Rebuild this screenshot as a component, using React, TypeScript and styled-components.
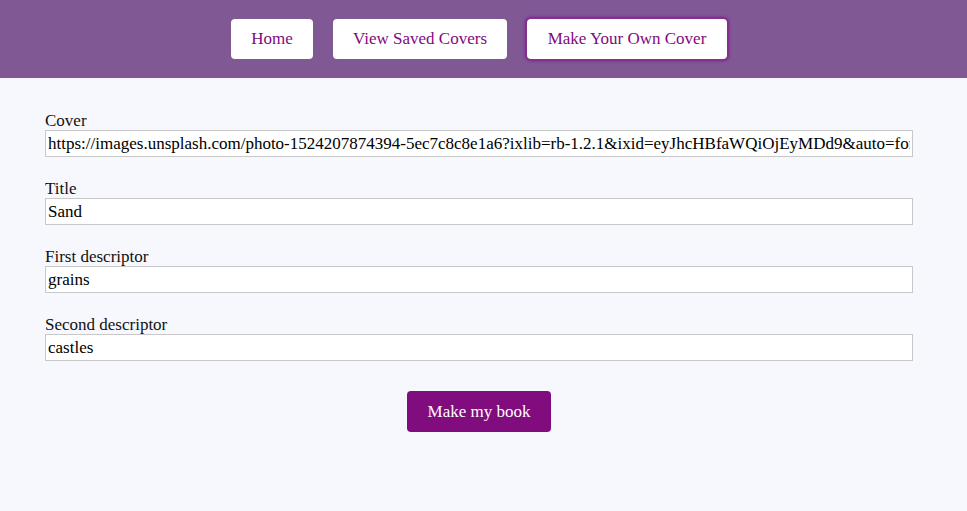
import React from 'react';
import styled, { createGlobalStyle } from 'styled-components';

const GlobalStyle = createGlobalStyle`
  html, body {
    margin: 0;
    padding: 0;
    background: #f7f8fd;
    font-family: "Liberation Serif", "DejaVu Serif", serif;
  }
`;

const Header = styled.header`
  height: 78px;
  background: #7f5894;
  display: flex;
  align-items: center;
  justify-content: center;
  gap: 20px;
  padding-right: 9px;
  box-sizing: border-box;
`;

const NavButton = styled.button<{ $width: number; $active?: boolean }>`
  width: ${(p) => p.$width}px;
  height: 40px;
  padding: 0;
  border: none;
  border-radius: 4px;
  background: #fff;
  color: #800a80;
  font-family: inherit;
  font-size: 17px;
  cursor: pointer;
  box-shadow: ${(p) =>
    p.$active ? '0 0 0 2px #84308e, 0 0 2px 3px rgba(132,48,142,0.7)' : 'none'};
`;

const Form = styled.form`
  padding: 34px 54px 0 45px;
  display: flex;
  flex-direction: column;
`;

const Field = styled.div`
  display: flex;
  flex-direction: column;
  margin-bottom: 23px;
`;

const Label = styled.label`
  font-size: 17px;
  color: #111;
  line-height: 18px;
`;

const Input = styled.input`
  height: 27px;
  box-sizing: border-box;
  border: 1px solid #c8c8c8;
  background: #fff;
  padding: 0 2px;
  font-family: inherit;
  font-size: 17px;
  color: #000;
  outline: none;
`;

const Submit = styled.button`
  align-self: center;
  margin-top: 7px;
  width: 144px;
  height: 41px;
  border: none;
  border-radius: 4px;
  background: #800c7d;
  color: #fff;
  font-family: inherit;
  font-size: 17px;
  cursor: pointer;
`;

const fields = [
  {
    label: 'Cover',
    value:
      'https://images.unsplash.com/photo-1524207874394-5ec7c8c8e1a6?ixlib=rb-1.2.1&ixid=eyJhcHBfaWQiOjEyMDd9&auto=format&fit=crop&w=800&q=60',
  },
  { label: 'Title', value: 'Sand' },
  { label: 'First descriptor', value: 'grains' },
  { label: 'Second descriptor', value: 'castles' },
];

export default function App() {
  return (
    <>
      <GlobalStyle />
      <Header>
        <NavButton $width={82}>Home</NavButton>
        <NavButton $width={174}>View Saved Covers</NavButton>
        <NavButton $width={200} $active>Make Your Own Cover</NavButton>
      </Header>
      <Form onSubmit={(e) => e.preventDefault()}>
        {fields.map((f) => (
          <Field key={f.label}>
            <Label>{f.label}</Label>
            <Input defaultValue={f.value} />
          </Field>
        ))}
        <Submit type="submit">Make my book</Submit>
      </Form>
    </>
  );
}
